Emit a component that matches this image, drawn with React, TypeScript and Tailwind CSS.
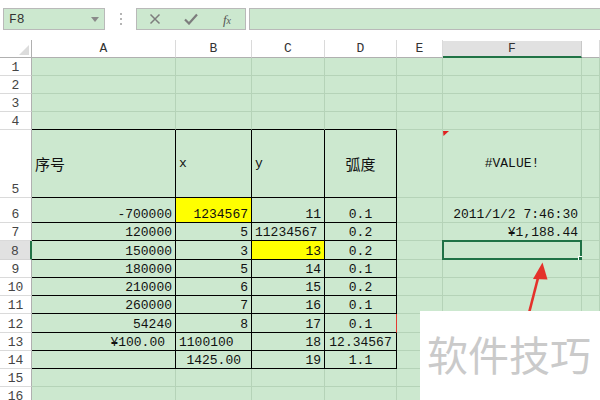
import React from "react";

type Align = "l" | "r" | "c" | "rp";
type Cell = { t?: string; a?: Align; bg?: string; cjk?: boolean };

const rowHeights = [18, 18, 18, 18, 68, 25, 18, 19, 18, 18, 18, 19, 18, 18, 18, 18];

const data: Record<number, Cell[]> = {
  5: [
    { t: "序号", a: "l", cjk: true },
    { t: "x", a: "l" },
    { t: "y", a: "l" },
    { t: "弧度", a: "c", cjk: true },
    {},
    { t: "#VALUE!", a: "c" },
  ],
  6: [
    { t: "-700000", a: "r" },
    { t: "1234567", a: "r", bg: "y" },
    { t: "11", a: "r" },
    { t: "0.1", a: "c" },
    {},
    { t: "2011/1/2 7:46:30", a: "r" },
  ],
  7: [
    { t: "120000", a: "r" },
    { t: "5", a: "r" },
    { t: "11234567", a: "l" },
    { t: "0.2", a: "c" },
    {},
    { t: "¥1,188.44", a: "r" },
  ],
  8: [{ t: "150000", a: "r" }, { t: "3", a: "r" }, { t: "13", a: "r", bg: "y" }, { t: "0.2", a: "c" }],
  9: [{ t: "180000", a: "r" }, { t: "5", a: "r" }, { t: "14", a: "r" }, { t: "0.1", a: "c" }],
  10: [{ t: "210000", a: "r" }, { t: "6", a: "r" }, { t: "15", a: "r" }, { t: "0.2", a: "c" }],
  11: [{ t: "260000", a: "r" }, { t: "7", a: "r" }, { t: "16", a: "r" }, { t: "0.1", a: "c" }],
  12: [{ t: "54240", a: "r" }, { t: "8", a: "r" }, { t: "17", a: "r" }, { t: "0.1", a: "c" }],
  13: [{ t: "¥100.00", a: "rp" }, { t: "1100100", a: "l" }, { t: "18", a: "r" }, { t: "12.34567", a: "c" }],
  14: [{}, { t: "1425.00", a: "rp" }, { t: "19", a: "r" }, { t: "1.1", a: "c" }],
};

const alignClass: Record<Align, string> = {
  l: "justify-start pl-[3px]",
  r: "justify-end pr-[3px]",
  c: "justify-center",
  rp: "justify-end pr-[10px]",
};

function DataCell({ r, c }: { r: number; c: number }) {
  const cell: Cell = (data[r] && data[r][c]) || {};
  const inTable = r >= 5 && r <= 14 && c <= 3;
  const bottomBlack = r >= 4 && r <= 14 && c <= 3;
  let rightCls = inTable ? "border-r-black" : "border-r-[#b5d3b8]";
  if (r === 12 && c === 3) rightCls = "border-r-[#e23a32]";
  const bottomCls = bottomBlack ? "border-b-black" : "border-b-[#b5d3b8]";
  const bgCls = cell.bg === "y" ? "bg-[#ffff00]" : "bg-[#cce8cf]";
  const vCls = r === 5 ? "items-center" : "items-end pb-[1px]";
  const aCls = alignClass[cell.a || "l"];
  const fontCls = cell.cjk
    ? "font-['Noto_Sans_CJK_SC',sans-serif] text-[15px]"
    : "font-['Liberation_Mono',monospace] text-[13px]";
  return (
    <div
      className={`relative flex min-w-0 overflow-visible whitespace-nowrap border-r border-b ${rightCls} ${bottomCls} ${bgCls} ${vCls} ${aCls}`}
    >
      {cell.t ? <span className={`${fontCls} leading-none text-[#111]`}>{cell.t}</span> : null}
      {r === 8 && c === 5 ? (
        <div className="absolute -left-[1px] -top-[1px] -right-[1px] -bottom-[1px] border-2 border-[#1f7246]">
          <div className="absolute -right-[3px] -bottom-[3px] w-[5px] h-[5px] bg-[#1f7246] border border-white" />
        </div>
      ) : null}
    </div>
  );
}

export default function App() {
  const letters = ["A", "B", "C", "D", "E", "F", ""];
  return (
    <div className="relative w-[600px] h-[400px] overflow-hidden bg-white font-['Liberation_Mono',monospace]">
      {/* formula bar */}
      <div className="h-[40px] flex items-start pt-[8px] pl-[3px] gap-0">
        <div className="w-[102px] h-[22px] border border-[#b9b9b9] bg-[#cce8cf] flex items-center justify-between pl-[5px] pr-[5px]">
          <span className="text-[13px] text-[#333] leading-none">F8</span>
          <svg width="8" height="5" viewBox="0 0 8 5">
            <polygon points="0,0 8,0 4,5" fill="#8a8a8a" />
          </svg>
        </div>
        <div className="w-[31px] h-[22px] flex flex-col items-center justify-center gap-[3px]">
          <div className="w-[2px] h-[2px] bg-[#b5b5b5]" />
          <div className="w-[2px] h-[2px] bg-[#b5b5b5]" />
          <div className="w-[2px] h-[2px] bg-[#b5b5b5]" />
        </div>
        <div className="w-[110px] h-[22px] border border-[#b9b9b9] bg-[#cce8cf] flex items-center">
          <div className="w-[36px] flex justify-center">
            <svg width="12" height="12" viewBox="0 0 12 12">
              <path d="M1.5 1.5 L10.5 10.5 M10.5 1.5 L1.5 10.5" stroke="#7d7d7d" strokeWidth="1.5" />
            </svg>
          </div>
          <div className="w-[36px] flex justify-center">
            <svg width="14" height="12" viewBox="0 0 14 12">
              <path d="M1 6.5 L5 10.5 L13 1.5" stroke="#7d7d7d" strokeWidth="2.2" fill="none" />
            </svg>
          </div>
          <div className="w-[36px] flex justify-center">
            <span className="font-['Liberation_Serif',serif] italic text-[13px] text-[#555] leading-none">
              f<span className="text-[10px]">x</span>
            </span>
          </div>
        </div>
        <div className="ml-[3px] flex-1 h-[22px] border border-[#b9b9b9] border-r-0 bg-[#cce8cf]" />
      </div>

      {/* sheet grid */}
      <div className="grid grid-cols-[32px_144px_76px_73px_72px_46px_139px_1fr] grid-rows-[18px_18px_18px_18px_18px_68px_25px_18px_19px_18px_18px_18px_19px_18px_18px_18px_18px]">
        {/* header row */}
        <div className="relative bg-white border-r border-b border-r-[#b0b0b0] border-b-[#b0b0b0]">
          <svg className="absolute right-[2px] bottom-[2px]" width="10" height="10" viewBox="0 0 10 10">
            <polygon points="10,0 10,10 0,10" fill="#dcdcdc" />
          </svg>
        </div>
        {letters.map((l, i) =>
          i === 5 ? (
            <div
              key={i}
              className="flex items-center justify-center bg-[#e1e1e1] border-r border-r-[#c8c8c8] border-b-2 border-b-[#217346] mt-[1px] text-[13px] text-[#333] leading-none"
            >
              {l}
            </div>
          ) : (
            <div
              key={i}
              className="flex items-center justify-center bg-white border-r border-b border-r-[#dadada] border-b-[#b0b0b0] text-[13px] text-[#333] leading-none"
            >
              {l}
            </div>
          )
        )}
        {rowHeights.map((_, ri) => {
          const r = ri + 1;
          return (
            <React.Fragment key={r}>
              {r === 8 ? (
                <div className="flex items-end justify-center pb-[1px] bg-[#e1e1e1] border-r-2 border-r-[#217346] border-b border-b-[#d4d4d4] text-[13px] text-[#444] leading-none">
                  {r}
                </div>
              ) : (
                <div className="flex items-end justify-center pb-[1px] bg-white border-r border-b border-r-[#b0b0b0] border-b-[#dadada] text-[13px] text-[#444] leading-none">
                  {r}
                </div>
              )}
              {[0, 1, 2, 3, 4, 5, 6].map((c) => (
                <DataCell key={c} r={r} c={c} />
              ))}
            </React.Fragment>
          );
        })}
      </div>

      {/* comment indicator and arrow */}
      <svg className="absolute left-0 top-0 pointer-events-none" width="600" height="400" viewBox="0 0 600 400">
        <polygon points="443,131 449,131 443.5,136" fill="#e02020" />
        <line x1="529" y1="313" x2="538.5" y2="276" stroke="#e4312b" strokeWidth="2.6" />
        <polygon points="542.5,262.5 533,279 547.5,279.5" fill="#e4312b" />
      </svg>

      {/* watermark */}
      <div className="absolute left-[420px] top-[311px] w-[180px] h-[89px] bg-white">
        <div className="pl-[7px] pt-[22px] font-['Noto_Sans_CJK_SC',sans-serif] text-[41px] leading-none text-[#cacaca] whitespace-nowrap tracking-[0px]">
          软件技巧
        </div>
      </div>
    </div>
  );
}
